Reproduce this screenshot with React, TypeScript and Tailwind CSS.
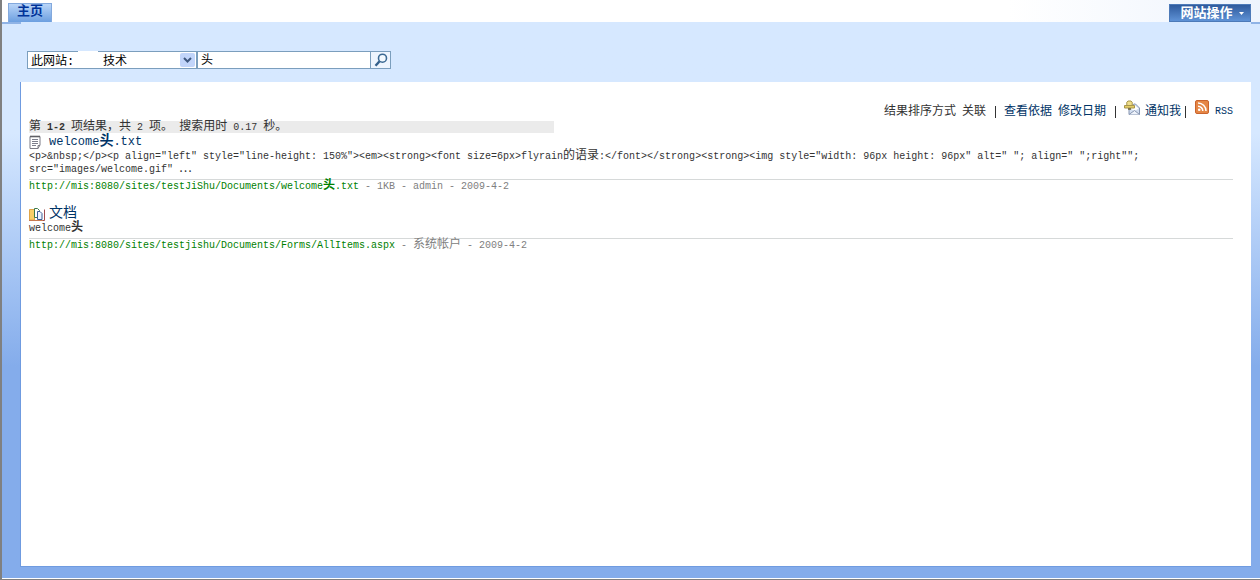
import { Fragment, useState } from 'react'
import type { ReactNode } from 'react'

type Result = {
  id: number
  icon: ReactNode
  title: string
  snippet: string[]
  url: string
  meta: string
}

const KEYWORD = '头'

// Latin text is set in a narrow mono face, Chinese runs are one step larger
function Mixed({ text, large = false, mark = false }: { text: string; large?: boolean; mark?: boolean }) {
  const parts = text.split(/([\u22ef\u3000-\u9fff\uff00-\uffef]+)/)
  return (
    <>
      {parts.map((part, i) => {
        if (i % 2 === 0) return <Fragment key={i}>{part}</Fragment>
        const size = large ? 'text-sm leading-none' : 'text-xs leading-none'
        const weight = mark && part === KEYWORD ? 'font-bold' : ''
        return <span key={i} className={`${size} ${weight}`}>{part}</span>
      })}
    </>
  )
}

function TextFileIcon() {
  return (
    <svg viewBox="0 0 12 14" className="w-3 h-3.5" aria-hidden="true">
      <path d="M1 1.500h10v8.500l-2 3.500H1z" fill="#fff" stroke="#7b7b85" />
      <path d="M1.500 1.500h9.500" stroke="#444" strokeDasharray="1 1" strokeWidth="2" />
      <path d="M3 4.500h6M3 6.500h6M3 8.500h6M3 10.500h4" stroke="#7d7f8c" />
      <path d="M9 13.500v-3h2" fill="none" stroke="#7b7b85" />
    </svg>
  )
}

function LibraryIcon() {
  return (
    <svg viewBox="0 0 16 13" className="w-4 h-[13px]" aria-hidden="true">
      <path d="M0.500 1.500h5v10.500h-5z" fill="#f8cf68" stroke="#e0a548" />
      <path d="M0 12.500h14.500" stroke="#c87a50" />
      <path d="M5.500 0.500h3l2 2v7h-5z" fill="#fff" stroke="#3c7a4a" />
      <path d="M8.500 3.500h2.500l2 2v6h-4.500z" fill="#eef4ff" stroke="#3d5f95" />
      <path d="M15.500 1.500v11h-1.500" fill="none" stroke="#a04a50" />
    </svg>
  )
}

function AlertIcon() {
  return (
    <svg viewBox="0 0 16 15" className="w-4 h-[15px]" aria-hidden="true">
      <path d="M5 7.500l5-3.500h1.500l4 4v6.500H5z" fill="#d3dff1" stroke="#8795b0" />
      <path d="M6.500 8.500l4.500-3 3.500 3-4 2.500z" fill="#fff" />
      <path d="M5 14.500l5.500-4 5 4" fill="#eef3fb" stroke="#8795b0" />
      <path d="M2.800 5.500V2.300L4 1h3l1.200 1.300v3.200z" fill="#efdf8c" stroke="#a8954c" />
      <path d="M.5 5.500h10v2.500H.5z" fill="#e3cd66" stroke="#a8954c" />
      <path d="M4 9h3" stroke="#6e6232" strokeWidth="1.500" />
    </svg>
  )
}

function RssIcon() {
  return (
    <svg viewBox="0 0 14 14" className="w-3.5 h-3.5" aria-hidden="true">
      <rect x="0.500" y="0.500" width="13" height="13" rx="1.500" fill="#e58645" stroke="#c9642e" />
      <circle cx="4.200" cy="9.800" r="1.300" fill="#fff" />
      <path d="M3 6.200a4.800 4.800 0 0 1 4.800 4.800M3 3a8 8 0 0 1 8 8" fill="none" stroke="#fff" strokeWidth="1.500" />
    </svg>
  )
}

function SearchIcon() {
  return (
    <svg viewBox="0 0 14 14" className="w-3.5 h-3.5" aria-hidden="true">
      <circle cx="8.500" cy="5.200" r="4" fill="#f4faff" stroke="#3c6a94" strokeWidth="1.600" />
      <path d="M5.600 8.200L1.500 12.800" stroke="#35618c" strokeWidth="2.400" />
    </svg>
  )
}

const results: Result[] = [
  {
    id: 1,
    icon: <TextFileIcon />,
    title: 'welcome头.txt',
    snippet: [
      '<p>&nbsp;</p><p align="left" style="line-height: 150%"><em><strong><font size=6px>flyrain的语录:</font></strong><strong><img style="width: 96px height: 96px" alt=" "; align=" ";right"";',
      'src="images/welcome.gif" ⋯',
    ],
    url: 'http://mis:8080/sites/testJiShu/Documents/welcome头.txt',
    meta: ' - 1KB - admin - 2009-4-2',
  },
  {
    id: 2,
    icon: <LibraryIcon />,
    title: '文档',
    snippet: ['welcome头'],
    url: 'http://mis:8080/sites/testjishu/Documents/Forms/AllItems.aspx',
    meta: ' - 系统帐户 - 2009-4-2',
  },
]

function TopBar() {
  return (
    <header className="flex items-start justify-between h-[22px] pl-1.5 pr-[9px] bg-linear-to-r from-white from-80% to-[#eef4fd]">
      <nav className="pt-[3px]">
        <a
          href="#home"
          className="flex items-center justify-center w-11 h-[19px] pb-0.5 border border-b-0 border-[#83a9dd] bg-linear-to-b from-[#b9d5f8] to-[#6c9fe0] text-[13px] font-bold text-[#003399]"
        >
          主页
        </a>
      </nav>
      <button
        type="button"
        className="flex items-center justify-center gap-1.5 w-[82px] h-[18px] mt-1 pl-1 border border-[#4d7ab8] bg-linear-to-b from-[#2f5b9d] to-[#5f92d6] text-[13px] leading-none font-bold text-white"
      >
        网站操作
        <svg viewBox="0 0 5 3" className="w-[5px] h-[3px]" aria-hidden="true">
          <path d="M0 0h5L2.500 3z" fill="#fff" />
        </svg>
      </button>
    </header>
  )
}

function SearchBox() {
  const [query, setQuery] = useState(KEYWORD)

  return (
    <form className="flex h-[18px] text-xs text-black" onSubmit={e => e.preventDefault()}>
      <div className="relative w-[170px]">
        <select
          aria-label="搜索范围"
          className="block appearance-none w-full h-full pt-0.5 pl-[3px] rounded-none border border-[#7b9ebd] bg-white leading-4 outline-none"
        >
          <option>此网站:{'\u00a0\u00a0\u00a0\u00a0'}技术</option>
        </select>
        <span className="absolute top-0 left-[51px] w-5 h-px bg-white pointer-events-none" />
        <span className="absolute top-0.5 right-0.5 flex items-center justify-center w-[15px] h-3.5 rounded-xs bg-[#c2d5fa] pointer-events-none">
          <svg viewBox="0 0 9 6" className="w-[9px] h-1.5" aria-hidden="true">
            <path d="M1 1l3.500 3.500L8 1" fill="none" stroke="#3f587f" strokeWidth="2" />
          </svg>
        </span>
      </div>
      <input
        type="text"
        aria-label="搜索"
        value={query}
        onChange={e => setQuery(e.target.value)}
        className="w-[174px] pt-0.5 px-[3px] border border-[#7b9ebd] bg-white outline-none"
      />
      <button type="submit" aria-label="搜索" className="flex items-center justify-center w-5 border border-l-0 border-[#7b9ebd] bg-[#eef5fe]">
        <SearchIcon />
      </button>
    </form>
  )
}

function SortBar() {
  return (
    <div className="flex items-center justify-end h-[18px] text-xs text-[#333]">
      <span>结果排序方式</span>
      <span className="ml-1.5">关联</span>
      <span className="ml-[9px] mr-2 w-px h-3 bg-[#333]" />
      <a href="#modified" className="text-[#003366]">
        查看依据<span className="ml-1.5">修改日期</span>
      </a>
      <span className="ml-[9px] mr-2 w-px h-3 bg-[#333]" />
      <a href="#alert" className="flex items-center gap-[5px] text-[#003366]">
        <span className="pb-2.5"><AlertIcon /></span>
        通知我
      </a>
      <span className="ml-1 mr-[9px] w-px h-3 bg-[#333]" />
      <a href="#rss" className="flex items-center gap-1.5 text-[#003366]">
        <span className="pb-2.5"><RssIcon /></span>
        <span className="text-[10px]">RSS</span>
      </a>
    </div>
  )
}

function ResultItem({ result }: { result: Result }) {
  return (
    <li className="mb-[13px]">
      <h2 className="flex items-center h-4 gap-1 text-xs text-[#003366]">
        <span className="flex w-4">{result.icon}</span>
        <a href={`#result-${result.id}`} className="leading-4 whitespace-nowrap"><Mixed text={result.title} large mark /></a>
      </h2>
      <p className="pb-[3px] leading-3 text-[#333] border-b border-[#d6d9d9]">
        {result.snippet.map((s, i) => (
          <Fragment key={i}><span><Mixed text={s} mark /></span>{' '}</Fragment>
        ))}
      </p>
      <p className="leading-[13px] text-[#808080]">
        <a href={result.url} className="text-[#008000]"><Mixed text={result.url} mark /></a>
        <Mixed text={result.meta} />
      </p>
    </li>
  )
}

export default function App() {
  return (
    <div className="flex flex-col min-h-screen bg-[#808080] pl-0.5 pb-px font-['Liberation_Mono','Noto_Sans_CJK_SC',monospace]">
      <TopBar />
      <div className="flex flex-col flex-1 pl-[18px] pr-[9px] pb-[11px] border-b border-white bg-linear-to-b from-[#d6e8ff] from-20% via-[#84aceb] via-62% to-[#84aceb]">
        <div className="flex justify-between h-0.5 -ml-[18px] -mr-[9px]">
          <span className="w-[19px] bg-[#8fb3e6]" />
          <span className="w-[9px] bg-[#8fb3e6]" />
        </div>
        <div className="pt-[27px] pb-[13px] pl-[7px]">
          <SearchBox />
        </div>
        <main className="flex-1 pl-2 pr-[18px] pt-[21px] border-l border-b border-[#6f9be0] bg-white">
          <SortBar />
          <p className="h-3 w-[525px] max-w-full bg-[#ebebeb] text-[10px] leading-3 text-[#333] whitespace-nowrap">
            <Mixed text="第 " /><b>1-2</b><Mixed text=" 项结果，共 2 项。 搜索用时 0.17 秒。" />
          </p>
          <ul className="pt-px text-[10px]">
            {results.map(r => <ResultItem key={r.id} result={r} />)}
          </ul>
        </main>
      </div>
    </div>
  )
}
